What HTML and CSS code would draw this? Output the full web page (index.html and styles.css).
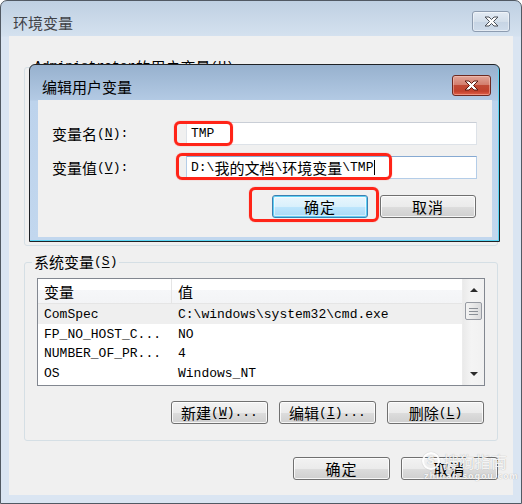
FILE: index.html
```html
<!DOCTYPE html>
<html lang="zh-CN">
<head>
<meta charset="utf-8">
<title>环境变量</title>
<link rel="stylesheet" href="styles.css">
</head>
<body>
<div class="window">
  <div class="titlebar">
    <span class="title">环境变量</span>
    <span class="close close-gray">
      <svg width="15" height="11" viewBox="0 0 15 11"><path d="M1,1 h4 l2.5,2.5 l2.5,-2.5 h4 l-4.5,4.5 l4.5,4.5 h-4 l-2.5,-2.5 l-2.5,2.5 h-4 l4.5,-4.5 z" fill="#fff" stroke="#4a4f57" stroke-width="1" stroke-linejoin="round"/></svg>
    </span>
  </div>
  <div class="client">
    <fieldset class="group group-user">
      <legend>Administrator <span class="zh">的用户变量</span>(<u>U</u>)</legend>
    </fieldset>
    <fieldset class="group group-sys">
      <legend><span class="zh">系统变量</span>(<u>S</u>)</legend>
      <div class="list">
        <div class="table">
          <div class="thead"><span class="zh">变量</span><span class="zh">值</span></div>
          <div class="row sel"><span>ComSpec</span><span>C:\windows\system32\cmd.exe</span></div>
          <div class="row"><span>FP_NO_HOST_C...</span><span>NO</span></div>
          <div class="row"><span>NUMBER_OF_PR...</span><span>4</span></div>
          <div class="row"><span>OS</span><span>Windows_NT</span></div>
        </div>
        <div class="scrollbar">
          <span class="sb-btn"><span class="arrow-up"></span></span>
          <span class="thumb">
            <svg width="9" height="7" viewBox="0 0 9 7"><path d="M0,0.5 H9 M0,3.5 H9 M0,6.5 H9" stroke="#8a8f96" stroke-width="1"/></svg>
          </span>
          <span class="sb-track"></span>
          <span class="sb-btn"><span class="arrow-down"></span></span>
        </div>
      </div>
      <div class="btnrow btnrow-sys">
        <button class="btn"><span class="zh">新建</span>(<u>W</u>)...</button>
        <button class="btn"><span class="zh">编辑</span>(<u>I</u>)...</button>
        <button class="btn"><span class="zh">删除</span>(<u>L</u>)</button>
      </div>
    </fieldset>
    <div class="btnrow footer">
      <button class="btn zh">确定</button>
      <button class="btn zh">取消</button>
    </div>
  </div>

  <div class="dialog">
    <div class="dtitle">
      <span class="dtitle-text">编辑用户变量</span>
      <span class="close close-red">
        <svg width="15" height="11" viewBox="0 0 15 11"><path d="M1,1 h4 l2.5,2.5 l2.5,-2.5 h4 l-4.5,4.5 l4.5,4.5 h-4 l-2.5,-2.5 l-2.5,2.5 h-4 l4.5,-4.5 z" fill="#fff" stroke="#5a1a12" stroke-width="1" stroke-linejoin="round"/></svg>
      </span>
    </div>
    <div class="dclient">
      <div class="form">
        <label class="lbl"><span class="zh">变量名</span>(<u>N</u>):</label>
        <div class="input">TMP</div>
        <label class="lbl"><span class="zh">变量值</span>(<u>V</u>):</label>
        <div class="input input-focus">D:\<span class="zh">我的文档</span>\<span class="zh">环境变量</span>\TMP<span class="caret"></span></div>
      </div>
      <div class="btnrow drow">
        <button class="btn btn-default zh">确定</button>
        <button class="btn zh">取消</button>
      </div>
    </div>
  </div>

  <div class="mark mark-name"></div>
  <div class="mark mark-value"></div>
  <div class="mark mark-ok"></div>

  <div class="watermark">
    <div class="wm-top"><span class="wm-logo">S</span><span class="wm-name">搜狗指南</span></div>
    <div class="wm-url">zhinan.sogou.com</div>
  </div>
</div>
</body>
</html>
```
FILE: styles.css
```css
html, body {
  margin: 0;
  padding: 0;
  background: #ffffff;
}

.window {
  position: relative;
  width: 522px;
  height: 504px;
  box-sizing: border-box;
  border: 1px solid #515963;
  border-radius: 7px 7px 0 0;
  background: linear-gradient(#bfd0e2, #d4e1ef 35px, #dae5f2 36px, #dae5f2);
  padding: 0 8px 8px;
  display: flex;
  flex-direction: column;
  font-family: "Liberation Mono", "Noto Sans CJK SC", monospace;
  font-size: 13px;
  color: #000;
}

.zh {
  font-family: "Noto Sans CJK SC", sans-serif;
  font-size: 15px;
}

u {
  text-decoration: underline;
  text-underline-offset: 2px;
}

/* ---------- title bar ---------- */
.titlebar {
  height: 35px;
  flex: none;
  display: flex;
  justify-content: space-between;
  align-items: flex-start;
  padding-left: 4px;
}

.title {
  font-family: "Noto Sans CJK SC", sans-serif;
  font-size: 15px;
  color: #3f4247;
  line-height: 20px;
  margin-top: 12px;
}

.close {
  width: 38px;
  height: 21px;
  box-sizing: border-box;
  border-radius: 3px;
  display: flex;
  align-items: center;
  justify-content: center;
}

.close-gray {
  margin-top: 10px;
  margin-right: 3px;
  border: 1px solid #8d9cb0;
  background: linear-gradient(#e3ebf4, #d3deea 50%, #c6d4e4 51%, #cfdceb);
  box-shadow: inset 0 0 0 1px rgba(255, 255, 255, 0.45);
}

/* ---------- client ---------- */
.client {
  flex: 1;
  background: #f0f0f0;
  padding: 23px 15px 15px;
  display: flex;
  flex-direction: column;
}

.group {
  margin: 0;
  min-width: 0;
  border: 1px solid #d5dfe5;
  border-radius: 3px;
  padding: 8px 12px 16px 12px;
}

.group legend {
  padding: 0 2px;
  margin-left: -5px;
  height: 16px;
  line-height: 16px;
  display: flex;
  align-items: center;
}

.group-user {
  height: 187px;
  box-sizing: border-box;
}

.group-sys {
  margin-top: 8px;
}

/* ---------- list ---------- */
.list {
  height: 108px;
  box-sizing: border-box;
  border: 1px solid #828790;
  background: #fff;
  display: flex;
}

.table {
  flex: 1;
  overflow: hidden;
}

.thead {
  height: 24px;
  border-bottom: 1px solid #e5e5e5;
  background: linear-gradient(#ffffff 0, #ffffff 45%, #f6f7f9 46%, #f3f4f6 100%);
  display: grid;
  grid-template-columns: 134px 1fr;
}

.thead span {
  display: flex;
  align-items: center;
  padding-left: 6px;
  padding-top: 1px;
}

.thead span:first-child {
  border-right: 1px solid #e5e5e5;
}

.row {
  height: 19.5px;
  line-height: 19.5px;
  display: grid;
  grid-template-columns: 134px 1fr;
  white-space: nowrap;
}

.row span {
  padding-left: 6px;
  padding-top: 1px;
}

.row.sel {
  background: #efefef;
}

.scrollbar {
  width: 21px;
  flex: none;
  border-left: 1px solid #ececec;
  background: linear-gradient(90deg, #eaeaea, #f4f4f4 40%, #f1f1f1);
  display: flex;
  flex-direction: column;
  align-items: center;
}

.sb-btn {
  height: 22px;
  width: 100%;
  display: flex;
  align-items: center;
  justify-content: center;
}

.arrow-up {
  width: 0;
  height: 0;
  border-left: 4px solid transparent;
  border-right: 4px solid transparent;
  border-bottom: 4px solid #2b2b2b;
}

.arrow-down {
  width: 0;
  height: 0;
  border-left: 4px solid transparent;
  border-right: 4px solid transparent;
  border-top: 4px solid #2b2b2b;
}

.thumb {
  width: 17px;
  height: 18px;
  box-sizing: border-box;
  border: 1px solid #969aa2;
  border-radius: 2px;
  background: linear-gradient(90deg, #f3f3f3, #e8e8e8 50%, #d9dadc);
  display: flex;
  align-items: center;
  justify-content: center;
  margin-top: 1px;
}

.sb-track {
  flex: 1;
}

/* ---------- buttons ---------- */
.btnrow {
  display: flex;
  justify-content: flex-end;
  gap: 11px;
}

.btnrow-sys {
  margin-top: 15px;
  margin-right: 1px;
}

.footer {
  margin-top: auto;
}

.btn {
  width: 97px;
  height: 23px;
  box-sizing: border-box;
  margin: 0;
  padding: 0;
  border: 1px solid #707070;
  border-radius: 3px;
  background: linear-gradient(#f2f2f2 0, #ebebeb 50%, #dddddd 51%, #cfcfcf 100%);
  box-shadow: inset 0 0 0 1px rgba(255, 255, 255, 0.8);
  display: flex;
  align-items: center;
  justify-content: center;
  font-family: "Liberation Mono", "Noto Sans CJK SC", monospace;
  font-size: 13px;
  color: #000;
  line-height: 1;
}

.btn.zh {
  font-family: "Noto Sans CJK SC", sans-serif;
  font-size: 15px;
  letter-spacing: 1px;
}

.btn-default {
  border-color: #3c7fb1;
  background: linear-gradient(#eaf6fd 0, #d9f0fc 50%, #bee6fd 51%, #a7d9f5 100%);
  box-shadow: inset 0 0 0 1px #5fd0f4, inset 0 0 0 2px rgba(255, 255, 255, 0.5);
}

/* ---------- dialog ---------- */
.dialog {
  position: absolute;
  left: 28px;
  top: 63px;
  width: 471px;
  height: 178px;
  box-sizing: border-box;
  border: 1px solid #1f2226;
  border-radius: 6px 6px 0 0;
  background: linear-gradient(#97b1ce, #b3cae4 35px, #bdd3ec 36px, #c2d7ee);
  box-shadow: inset -1px -1px 0 #5ad6f4;
  display: flex;
  flex-direction: column;
}

.dtitle {
  height: 35px;
  flex: none;
  display: flex;
  justify-content: space-between;
  align-items: flex-start;
  padding: 0 8px 0 12px;
}

.dtitle-text {
  font-family: "Noto Sans CJK SC", sans-serif;
  font-size: 15px;
  line-height: 20px;
  margin-top: 12px;
  color: #000;
}

.close-red {
  width: 39px;
  margin-top: 10px;
  border: 1px solid #6e2a21;
  background: linear-gradient(#e2a598 0, #d37e6e 45%, #c04a36 50%, #c2412c 80%, #e2614a 100%);
  box-shadow: inset 0 0 0 1px rgba(255, 210, 200, 0.45);
}

.dclient {
  flex: 1;
  margin: 0 7px 4px 8px;
  background: #f0f0f0;
  padding: 22px 15px 0 14px;
}

.form {
  display: grid;
  grid-template-columns: 134px 1fr;
  row-gap: 11px;
  align-items: center;
}

.lbl {
  display: flex;
  align-items: center;
  height: 23px;
}

.input {
  height: 23px;
  box-sizing: border-box;
  background: #fff;
  border: 1px solid #dde2e8;
  border-top-color: #c9ced6;
  padding-left: 4px;
  display: flex;
  align-items: center;
  white-space: nowrap;
}

.input-focus {
  border-color: #b4cde8;
  border-top-color: #86a9d2;
}

.caret {
  width: 0;
  height: 15px;
  border-left: 1px solid #000;
  margin-left: 1px;
}

.drow {
  margin-top: 16px;
  margin-right: 1px;
  gap: 12px;
}

.drow .btn {
  width: 96px;
}

/* ---------- annotation marks ---------- */
.mark {
  position: absolute;
  box-sizing: border-box;
  border: 3px solid #ff2418;
  border-radius: 6px;
  box-shadow: 0 0 1px #ff5a50;
}

.mark-name {
  left: 173px;
  top: 120px;
  width: 59px;
  height: 25px;
}

.mark-value {
  left: 175px;
  top: 152px;
  width: 216px;
  height: 27px;
}

.mark-ok {
  left: 248px;
  top: 186px;
  width: 130px;
  height: 35px;
}

/* ---------- watermark ---------- */
.watermark {
  position: absolute;
  left: 421px;
  top: 450px;
  color: rgba(255, 255, 255, 0.9);
  text-shadow: 0 0 1px rgba(0, 0, 0, 0.35);
  pointer-events: none;
}

.wm-top {
  display: flex;
  align-items: center;
  gap: 3px;
}

.wm-logo {
  width: 14px;
  height: 14px;
  border: 2px solid rgba(255, 255, 255, 0.9);
  border-radius: 50%;
  font-family: "DejaVu Sans", sans-serif;
  font-size: 11px;
  font-weight: bold;
  line-height: 14px;
  text-align: center;
  box-shadow: 0 0 1px rgba(0, 0, 0, 0.3);
}

.wm-name {
  font-family: "Noto Sans CJK SC", sans-serif;
  font-size: 16px;
  line-height: 20px;
}

.wm-url {
  font-family: "DejaVu Sans", sans-serif;
  font-size: 8px;
  font-weight: bold;
  letter-spacing: 0.8px;
  margin-top: 1px;
  padding-left: 2px;
}
```
